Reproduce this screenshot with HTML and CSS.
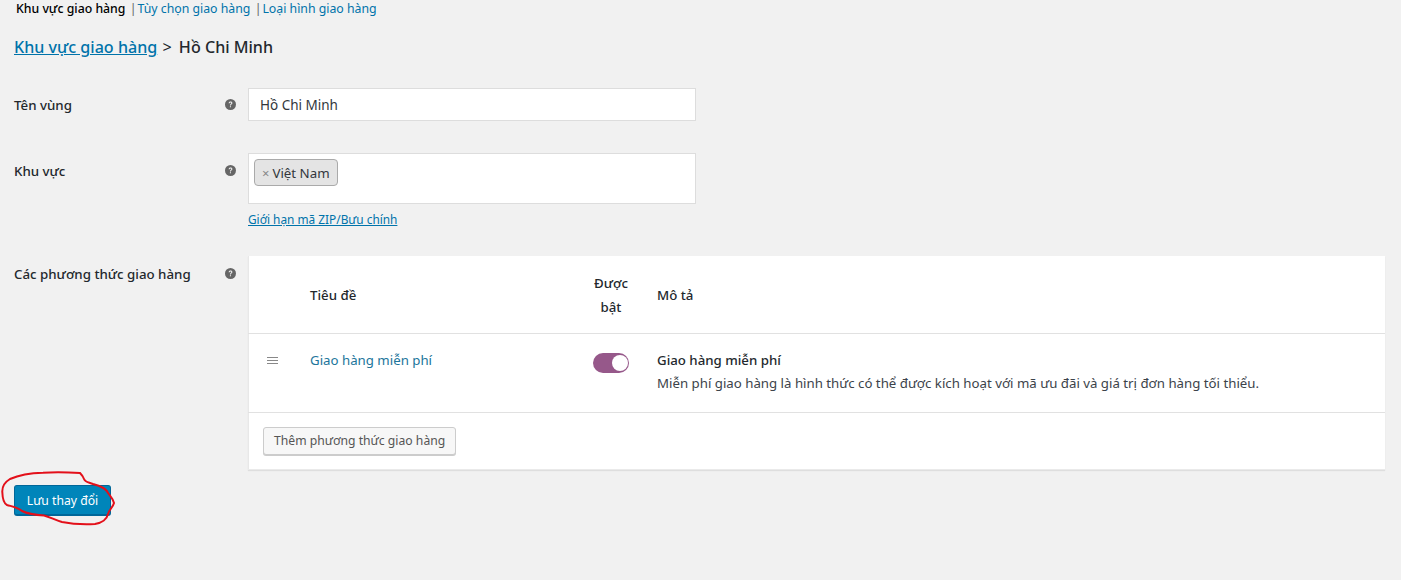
FILE: index.html
```html
<!DOCTYPE html>
<html lang="vi">
<head>
<meta charset="utf-8">
<title>Khu vực giao hàng</title>
<link rel="stylesheet" href="styles.css">
</head>
<body>
<main class="page">
  <nav class="subnav">
    <b class="current">Khu vực giao hàng</b>
    <span class="sep">|</span><a href="#">Tùy chọn giao hàng</a>
    <span class="sep">|</span><a href="#">Loại hình giao hàng</a>
  </nav>
  <h2 class="crumb"><a href="#">Khu vực giao hàng</a> <span class="gt">&gt;</span> <span>Hồ Chi Minh</span></h2>

  <div class="row row-name">
    <label class="label">Tên vùng</label>
    <span class="tip"><svg viewBox="0 0 20 20"><circle cx="10" cy="10" r="10"/><path class="q" d="M6.6 7.6C6.8 5.6 8.2 4.6 10.1 4.6c2 0 3.4 1.1 3.4 2.8 0 2.4-2.7 2.4-2.7 4.4H9c0-3 2.5-2.900 2.500-4.400 0-.7-.6-1.100-1.400-1.100-.9 0-1.500.5-1.600 1.500zM8.900 13h2v2.200h-2z"/></svg></span>
    <div class="field"><div class="input">Hồ Chi Minh</div></div>
  </div>

  <div class="row row-area">
    <label class="label">Khu vực</label>
    <span class="tip"><svg viewBox="0 0 20 20"><circle cx="10" cy="10" r="10"/><path class="q" d="M6.6 7.6C6.8 5.6 8.2 4.6 10.1 4.6c2 0 3.4 1.1 3.4 2.8 0 2.4-2.7 2.4-2.7 4.4H9c0-3 2.5-2.900 2.500-4.400 0-.7-.6-1.100-1.400-1.100-.9 0-1.500.5-1.600 1.500zM8.900 13h2v2.200h-2z"/></svg></span>
    <div class="field">
      <div class="select"><span class="chip"><span class="x">×</span>Việt Nam</span></div>
      <a class="zip" href="#">Giới hạn mã ZIP/Bưu chính</a>
    </div>
  </div>

  <div class="row row-methods">
    <label class="label">Các phương thức giao hàng</label>
    <span class="tip"><svg viewBox="0 0 20 20"><circle cx="10" cy="10" r="10"/><path class="q" d="M6.6 7.6C6.8 5.6 8.2 4.6 10.1 4.6c2 0 3.4 1.1 3.4 2.8 0 2.4-2.7 2.4-2.7 4.4H9c0-3 2.5-2.900 2.500-4.400 0-.7-.6-1.100-1.400-1.100-.9 0-1.500.5-1.600 1.500zM8.900 13h2v2.200h-2z"/></svg></span>
    <div class="panel">
      <div class="thead">
        <span></span>
        <b>Tiêu đề</b>
        <b class="center">Được<br>bật</b>
        <b>Mô tả</b>
      </div>
      <div class="tbody">
        <span class="handle"><i></i><i></i><i></i></span>
        <a href="#">Giao hàng miễn phí</a>
        <span class="toggle"><i></i></span>
        <div class="desc"><b>Giao hàng miễn phí</b><br>Miễn phí giao hàng là hình thức có thể được kích hoạt với mã ưu đãi và giá trị đơn hàng tối thiểu.</div>
      </div>
      <div class="tfoot"><button class="btn" type="button">Thêm phương thức giao hàng</button></div>
    </div>
  </div>

  <button class="save" type="button">Lưu thay đổi</button>
</main>
<svg class="scribble" viewBox="0 0 130 70" fill="none"><path d="M80 3 C66 2 52 2 43 2.700 C30 3 19 5 10 9 C5 12 2 16 2.300 22 C2.500 28 3 33 7 35 C12 36.500 17 37 22 41 C28 44 36 45 44 45.500 C50 47 55 50 62 52 C72 54 85 54.500 95 54 C102 53 107 49 108 44 C109 40 113 37 114 33 C113 29 111 27 108 23 C106 18 100 16 93 14 C88 12 85 12 84 9 C83 6 82 5 80 3 Z"/></svg>
</body>
</html>
```
FILE: styles.css
```css
* { box-sizing: border-box; }
html, body { margin: 0; height: 580px; overflow: hidden; }
body {
  position: relative;
  background: #f1f1f1;
  color: #23282d;
  font: 13.3px/20px "Noto Sans", "Open Sans", sans-serif;
}
a { color: #0073aa; text-decoration: none; }
.page { padding: 0 16px 0 14px; }
.subnav { height: 17px; font-size: 12.3px; line-height: 17px; padding-left: 2px; color: #555; white-space: nowrap; }
.subnav .current { font-weight: 500; color: #000; }
.subnav .sep { color: #666; margin: 0 1px; }
.crumb {
  margin: 18px 0 0;
  height: 24px;
  font-size: 16.1px;
  line-height: 24px;
  font-weight: 500;
  color: #23282d;
}
.crumb a { text-decoration: underline; font-weight: 500; }
.crumb .gt { margin: 0 3px 0 1px; font-weight: 400; }
.row { display: grid; grid-template-columns: 209px 25px 1fr; }
.row-name { margin-top: 29px; }
.row-area { margin-top: 32px; }
.row-methods { margin-top: 26px; }
.label { font-weight: 500; color: #23282d; }
.row-name .label { padding-top: 7px; }
.row-area .label { padding-top: 8px; }
.row-methods .label { padding-top: 8px; }
.tip { display: block; width: 11px; height: 11px; margin-left: 2px; }
.row-name .tip { margin-top: 11px; }
.row-area .tip { margin-top: 12px; }
.row-methods .tip { margin-top: 12px; }
.tip svg { display: block; width: 11px; height: 11px; fill: #666; }
.tip .q { fill: #f1f1f1; }
.input {
  width: 448px;
  height: 33px;
  padding: 6px 11px;
  font-size: 13.5px;
  background: #fff;
  border: 1px solid #ddd;
  color: #32373c;
}
.select {
  width: 448px;
  height: 51px;
  padding: 5px;
  background: #fff;
  border: 1px solid #ddd;
}
.chip {
  display: inline-block;
  height: 27px;
  padding: 3px 7px 0 7px;
  line-height: 21px;
  background: #e4e4e4;
  border: 1px solid #aaa;
  border-radius: 4px;
  color: #32373c;
}
.chip .x { color: #888; margin-right: 3px; font-size: 13px; }
.zip { display: block; margin-top: 5px; height: 21px; font-size: 11.85px; text-decoration: underline; }
.panel { background: #fff; box-shadow: inset 1px 0 0 #e8e8e8, 0 1px 1px rgba(0,0,0,.08); border: 1px solid #eaeaea; border-width: 0 0 1px; }
.thead, .tbody { display: grid; grid-template-columns: 62px 283px 64px 1fr; font-size: 13.25px; }
.thead {
  height: 78px;
  align-items: center;
  line-height: 24px;
  border-bottom: 1px solid #e1e1e1;
}
.thead b, .desc b { font-weight: 500; }
.thead .center { text-align: center; width: 36px; margin-left: 0; }
.tbody { height: 79px; padding-top: 16px; border-bottom: 1px solid #e1e1e1; }
.tbody > a { color: #21759b; }
.handle { display: flex; flex-direction: column; gap: 2px; padding: 7px 0 0 19px; }
.handle i { display: block; width: 11px; height: 1px; background: #888; }
.toggle {
  display: block;
  position: relative;
  width: 36px;
  height: 20px;
  margin-top: 3px;
  border-radius: 10px;
  background: #96588a;
}
.toggle i {
  position: absolute;
  top: 2px;
  right: 1px;
  width: 16px;
  height: 16px;
  border-radius: 50%;
  background: #fff;
}
.desc { line-height: 23px; margin-top: -1px; white-space: nowrap; color: #3c434a; }
.desc b { color: #23282d; }
.tfoot { padding: 14px 15px 0; height: 56px; }
.btn {
  display: block;
  height: 28px;
  padding: 0 10px;
  font: inherit;
  font-size: 12.2px;
  line-height: 26px;
  color: #555;
  background: #f7f7f7;
  border: 1px solid #ccc;
  border-radius: 3px;
  box-shadow: 0 1px 0 #ccc;
}
.save {
  display: block;
  width: 97px;
  height: 31px;
  margin-top: 15px;
  padding: 2px 0 0;
  font: inherit;
  font-size: 12.2px;
  color: #fff;
  background: #0085ba;
  border: 1px solid #006799;
  border-width: 1px 1px 2px;
  border-radius: 3px;
}
.scribble {
  position: absolute;
  left: 0;
  top: 470px;
  width: 130px;
  height: 70px;
  pointer-events: none;
}
.scribble path { stroke: #e3101a; stroke-width: 2; }
```
